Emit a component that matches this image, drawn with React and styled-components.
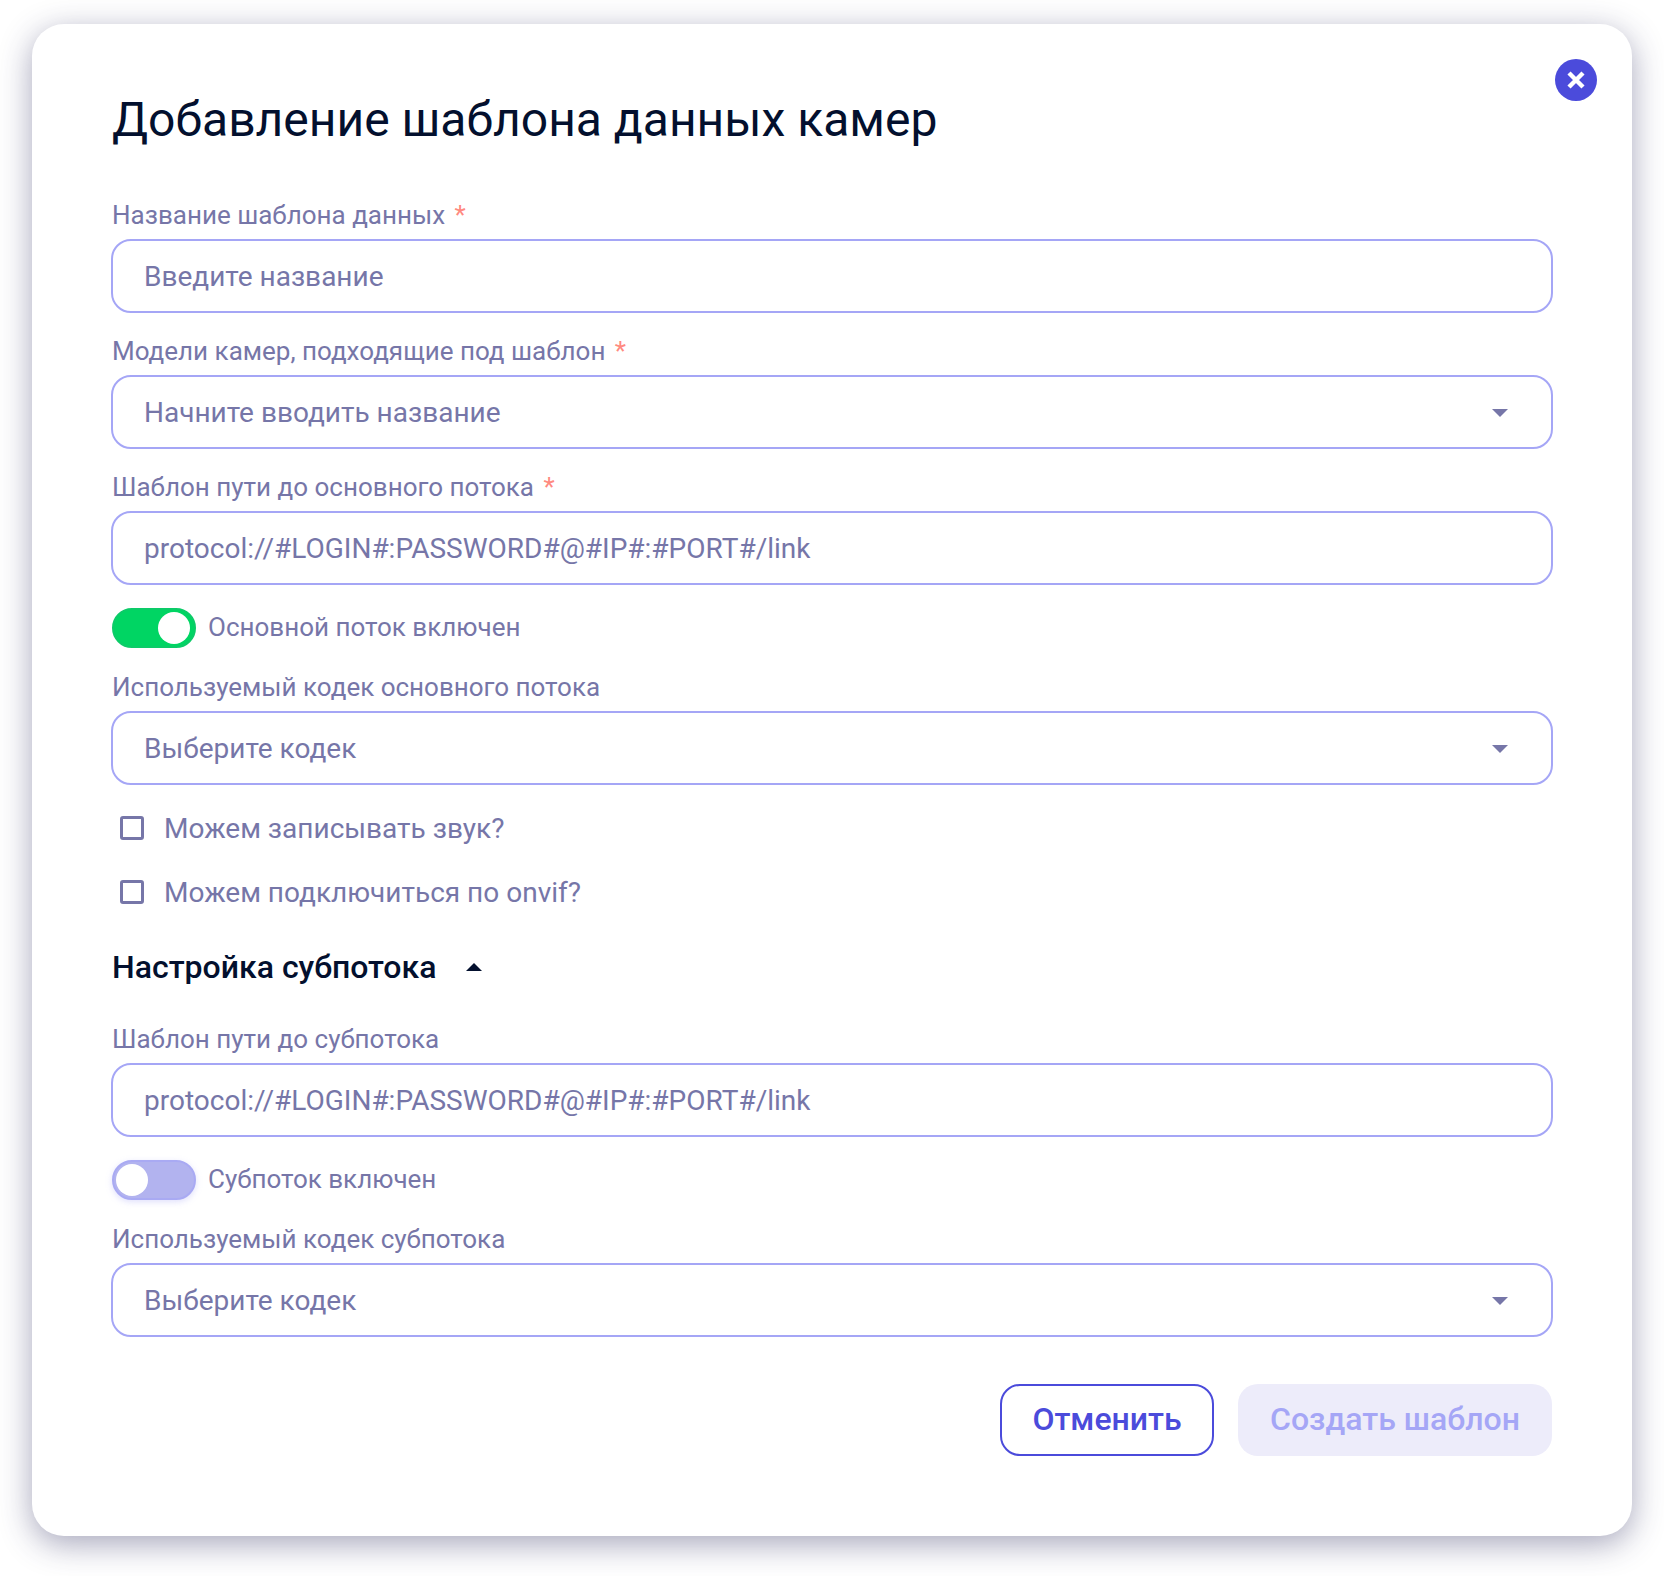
import styled, { createGlobalStyle } from 'styled-components'

const Global = createGlobalStyle`
  html, body { margin: 0; padding: 0; background: #fff; }
  * { box-sizing: border-box; }
  body { font-family: Roboto, "Liberation Sans", sans-serif; }
`

export default function App() {
  return (
    <Page>
      <Global />
      <Card>
        <CloseButton aria-label="Закрыть">
          <svg width="20" height="20" viewBox="0 0 20 20">
            <path d="M3 3 L17 17 M17 3 L3 17" stroke="#fff" strokeWidth="4.4" fill="none" />
          </svg>
        </CloseButton>
        <Title>Добавление шаблона данных камер</Title>

        <Field>
          <Label>Название шаблона данных <Star>*</Star></Label>
          <Input placeholder="Введите название" />
        </Field>
        <Field>
          <Label>Модели камер, подходящие под шаблон <Star>*</Star></Label>
          <Select text="Начните вводить название" />
        </Field>
        <Field>
          <Label>Шаблон пути до основного потока <Star>*</Star></Label>
          <Input placeholder="protocol://#LOGIN#:PASSWORD#@#IP#:#PORT#/link" />
        </Field>
        <ToggleRow>
          <Toggle $on><Knob /></Toggle>
          <ToggleText>Основной поток включен</ToggleText>
        </ToggleRow>
        <Field>
          <Label>Используемый кодек основного потока</Label>
          <Select text="Выберите кодек" />
        </Field>

        <Checks>
          <CheckRow><Box /><CheckText>Можем записывать звук?</CheckText></CheckRow>
          <CheckRow><Box /><CheckText>Можем подключиться по onvif?</CheckText></CheckRow>
        </Checks>

        <SectionHead>
          <SectionTitle>Настройка субпотока</SectionTitle>
          <Caret width="16" height="8" viewBox="0 0 16 8"><path d="M0 8 L8 0 L16 8 Z" fill="#03102e" /></Caret>
        </SectionHead>

        <Field>
          <Label>Шаблон пути до субпотока</Label>
          <Input placeholder="protocol://#LOGIN#:PASSWORD#@#IP#:#PORT#/link" />
        </Field>
        <ToggleRow>
          <Toggle><Knob /></Toggle>
          <ToggleText>Субпоток включен</ToggleText>
        </ToggleRow>
        <Field>
          <Label>Используемый кодек субпотока</Label>
          <Select text="Выберите кодек" />
        </Field>

        <Footer>
          <CancelButton>Отменить</CancelButton>
          <SubmitButton>Создать шаблон</SubmitButton>
        </Footer>
      </Card>
    </Page>
  )
}

function Select({ text }) {
  return (
    <SelectBox>
      <span>{text}</span>
      <SelectCaret width="16" height="8" viewBox="0 0 16 8"><path d="M0 0 L16 0 L8 8 Z" fill="#7676a8" /></SelectCaret>
    </SelectBox>
  )
}

////////////////////////////////////////////////////
// Styles
////////////////////////////////////////////////////

const Page = styled.div`
  width: 1664px;
  height: 1576px;
  padding: 24px 32px 40px 32px;
  background: #fff;
`

const Card = styled.div`
  position: relative;
  width: 1600px;
  height: 1512px;
  padding: 64px 80px 80px 80px;
  background: #fff;
  border-radius: 32px;
  box-shadow: 0 8px 32px rgba(44, 44, 94, 0.42);
`

const CloseButton = styled.button`
  position: absolute;
  top: 35px;
  right: 35px;
  width: 42px;
  height: 42px;
  padding: 0;
  border: 0;
  border-radius: 50%;
  background: #4b4bdb;
  display: flex;
  align-items: center;
  justify-content: center;
`

const Title = styled.h1`
  margin: 0 0 47px;
  font-size: 48px;
  line-height: 64px;
  font-weight: 400;
  color: #03102e;
`

const Field = styled.div`
  margin-bottom: 22px;
`

const Label = styled.div`
  height: 32px;
  margin-bottom: 8px;
  font-size: 26px;
  line-height: 32px;
  color: #7676a8;
`

const Star = styled.span`
  margin-left: 3px;
  color: #ff8a80;
`

const Input = styled.input`
  display: block;
  width: calc(100% + 2px);
  height: 74px;
  margin: 0 -1px;
  padding: 0 31px;
  border: 2px solid #a5a6f6;
  border-radius: 20px;
  outline: none;
  background: #fff;
  font-family: inherit;
  font-size: 28px;
  color: #7676a8;
  &::placeholder { color: #7676a8; opacity: 1; }
`

const SelectBox = styled.div`
  display: flex;
  align-items: center;
  justify-content: space-between;
  height: 74px;
  margin: 0 -1px;
  padding: 0 43px 0 31px;
  border: 2px solid #a5a6f6;
  border-radius: 20px;
  font-size: 28px;
  color: #7676a8;
`

const SelectCaret = styled.svg`
  display: block;
  margin-top: 2px;
`

const ToggleRow = styled.div`
  display: flex;
  align-items: center;
  gap: 12px;
  height: 40px;
  margin: 23px 0;
`

const Toggle = styled.div`
  display: flex;
  justify-content: ${p => (p.$on ? 'flex-end' : 'flex-start')};
  width: 84px;
  height: 40px;
  padding: ${p => (p.$on ? '2px 4px 2px 2px' : '2px')};
  border: 2px solid ${p => (p.$on ? '#0ccb68' : '#a9aaf3')};
  border-radius: 20px;
  background: ${p => (p.$on ? '#00d563' : '#b2b3ef')};
  box-shadow: ${p => (p.$on ? 'none' : '0 2px 6px rgba(165, 166, 246, 0.35)')};
`

const Knob = styled.div`
  width: 32px;
  height: 32px;
  border-radius: 50%;
  background: #fff;
`

const ToggleText = styled.span`
  padding-bottom: 2px;
  font-size: 26px;
  color: #7676a8;
`

const Checks = styled.div`
  display: flex;
  flex-direction: column;
  gap: 24px;
  margin-top: 23px;
`

const CheckRow = styled.div`
  display: flex;
  align-items: center;
  gap: 20px;
  height: 40px;
  padding-left: 8px;
`

const Box = styled.div`
  width: 24px;
  height: 24px;
  border: 3px solid #7676a8;
  border-radius: 3px;
`

const CheckText = styled.span`
  font-size: 28px;
  color: #7676a8;
`

const SectionHead = styled.div`
  display: flex;
  align-items: center;
  gap: 30px;
  height: 40px;
  margin: 35px 0 36px;
`

const SectionTitle = styled.h2`
  margin: 0;
  font-size: 32px;
  font-weight: 500;
  color: #03102e;
`

const Caret = styled.svg`
  display: block;
`

const Footer = styled.div`
  display: flex;
  justify-content: flex-end;
  gap: 24px;
  margin-top: 47px;
`

const CancelButton = styled.button`
  width: 214px;
  height: 72px;
  padding: 0 0 2px;
  border: 2px solid #4b4bdb;
  border-radius: 20px;
  background: #fff;
  font-family: inherit;
  font-size: 32px;
  font-weight: 500;
  color: #4b4bdb;
`

const SubmitButton = styled.button`
  width: 314px;
  height: 72px;
  padding: 0 0 2px;
  border: 0;
  border-radius: 20px;
  background: #edecfa;
  font-family: inherit;
  font-size: 32px;
  font-weight: 500;
  color: #a5a6f6;
`
